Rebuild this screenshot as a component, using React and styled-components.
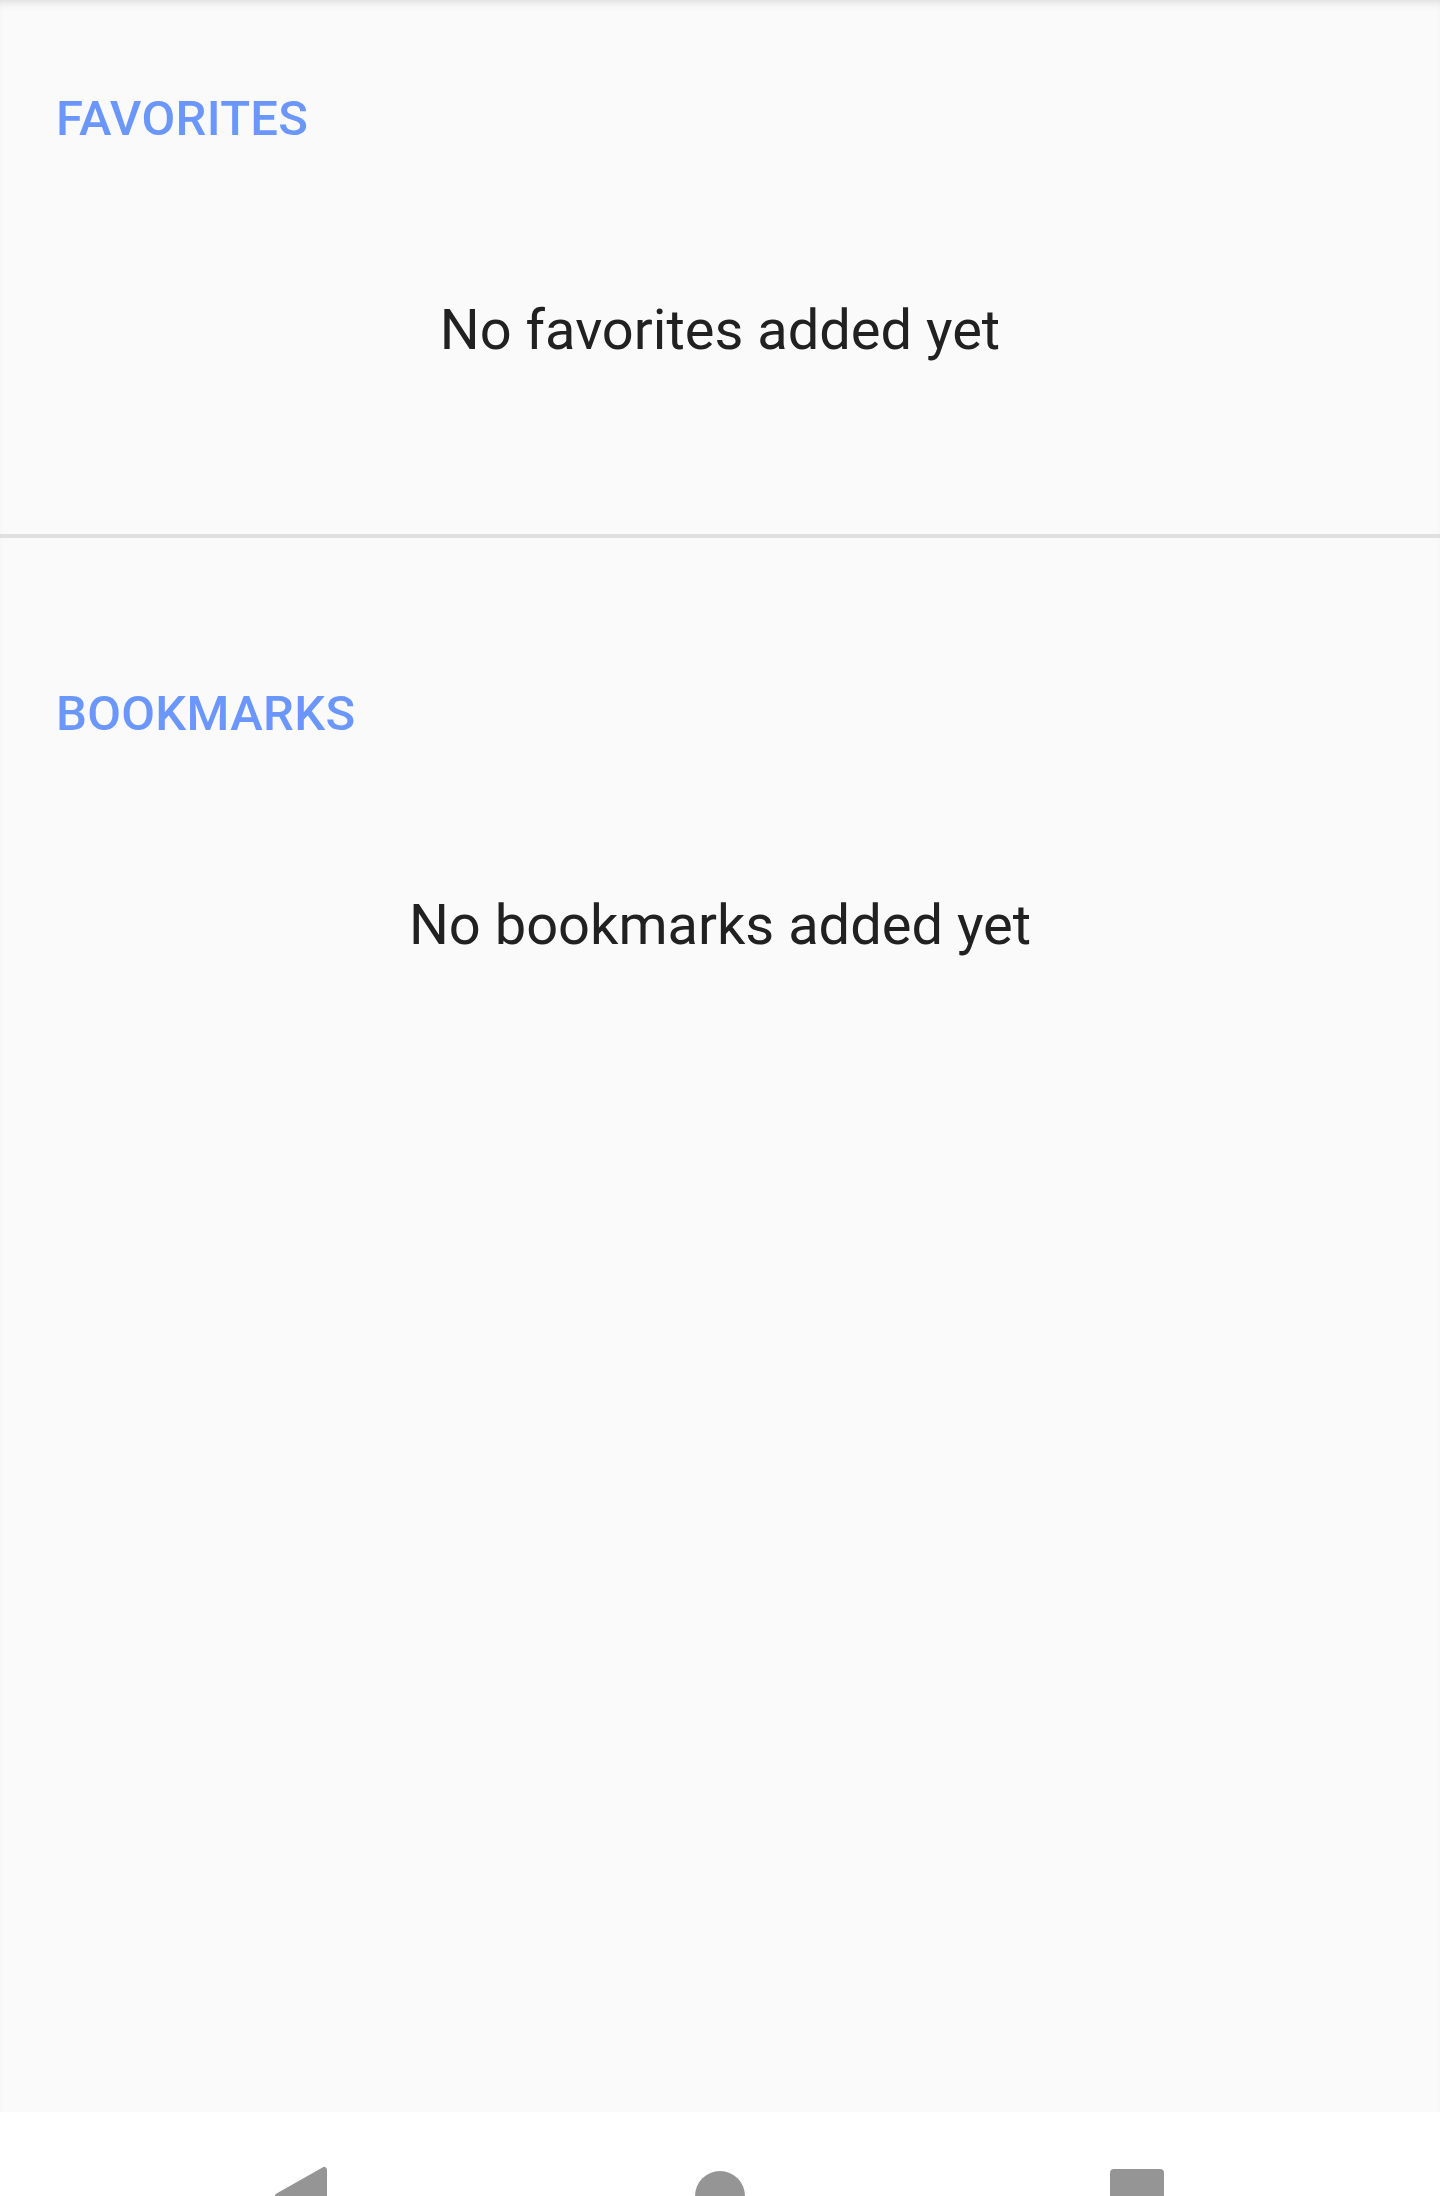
import styled, { createGlobalStyle } from 'styled-components';

const GlobalStyle = createGlobalStyle`
    html, body {
        margin: 0;
        padding: 0;
        height: 2196px;
        overflow: hidden;
        background: #fafafa;
    }
    * {
        box-sizing: border-box;
    }
`

const Screen = styled.div`
    width: 1440px;
    height: 2196px;
    display: flex;
    flex-direction: column;
    font-family: Roboto, "Noto Sans", sans-serif;
    overflow: hidden;
`

const Content = styled.main`
    height: 2112px;
    flex-shrink: 0;
    background: #fafafa;
    box-shadow: inset 0 7px 8px -5px rgba(0, 0, 0, 0.13);
`

const Section = styled.section`
    display: flex;
    flex-direction: column;
    padding: ${({ top }) => top}px 56px 0;
    height: ${({ height }) => height ? `${height}px` : 'auto'};
`

const Heading = styled.h2`
    margin: 0;
    font-size: 49px;
    line-height: 57px;
    font-weight: 500;
    color: #6b97fc;
    letter-spacing: 0.3px;
`

const EmptyText = styled.p`
    margin: 150px 0 0 -56px;
    width: 1440px;
    font-size: 56px;
    line-height: 66px;
    font-weight: 400;
    color: #212121;
    text-align: center;
`

const Divider = styled.hr`
    margin: 0;
    border: none;
    height: 4px;
    background: #e0e0e0;
`

const NavBar = styled.nav`
    height: 84px;
    flex-shrink: 0;
    background: #ffffff;
    display: flex;
    justify-content: center;
    gap: 249px;
    overflow: hidden;
`

const NavButton = styled.svg`
    width: 168px;
    height: 168px;
    flex-shrink: 0;
    fill: #959595;
`

function BackIcon() {
    return (
        <NavButton viewBox="0 0 168 168">
            <polygon points="105,58 105,110 59,84" stroke="#959595" strokeWidth="6" strokeLinejoin="round" />
        </NavButton>
    )
}

function HomeIcon() {
    return (
        <NavButton viewBox="0 0 168 168">
            <circle cx="84" cy="84" r="25" />
        </NavButton>
    )
}

function RecentsIcon() {
    return (
        <NavButton viewBox="0 0 168 168">
            <rect x="57" y="57" width="54" height="54" rx="4" />
        </NavButton>
    )
}

function App() {
    return (
        <Screen>
            <GlobalStyle />
            <Content>
                <Section top={90} height={534}>
                    <Heading>FAVORITES</Heading>
                    <EmptyText>No favorites added yet</EmptyText>
                </Section>
                <Divider />
                <Section top={147}>
                    <Heading>BOOKMARKS</Heading>
                    <EmptyText>No bookmarks added yet</EmptyText>
                </Section>
            </Content>
            <NavBar>
                <BackIcon />
                <HomeIcon />
                <RecentsIcon />
            </NavBar>
        </Screen>
    )
}

export default App;
